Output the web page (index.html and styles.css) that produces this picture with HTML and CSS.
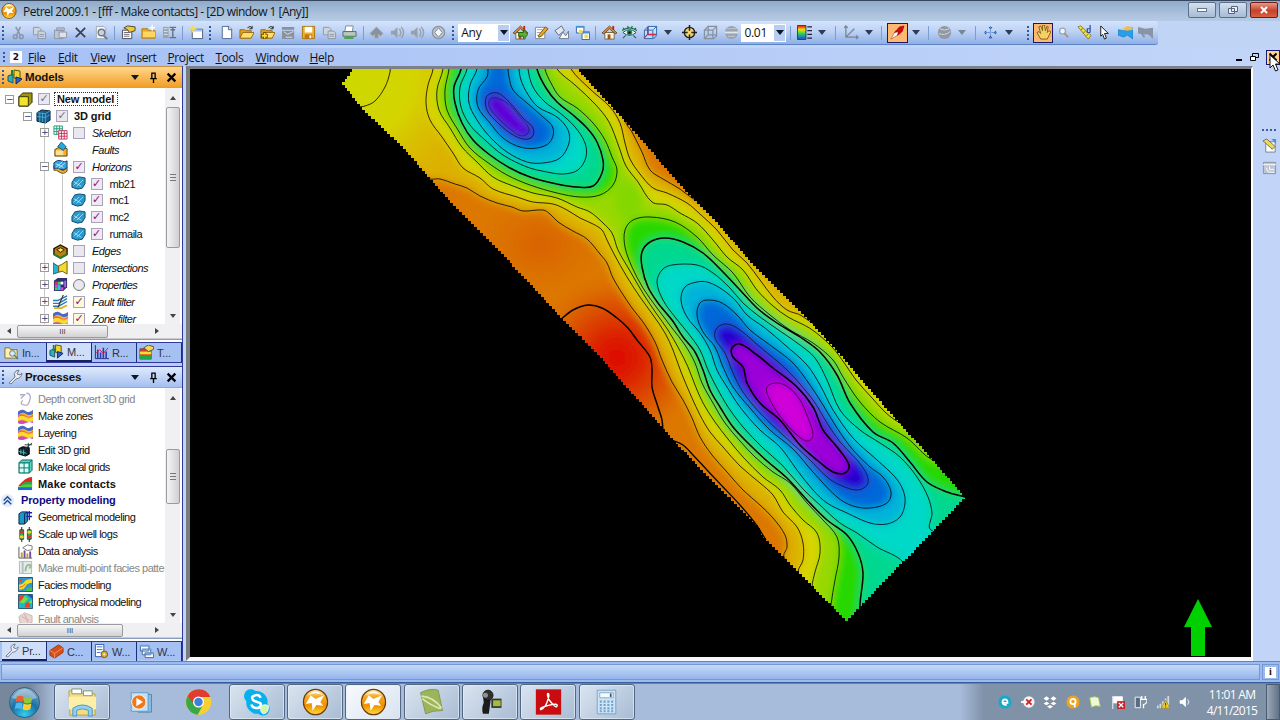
FILE: index.html
```html
<!DOCTYPE html>
<html lang="en">
<head>
<meta charset="utf-8">
<title>Petrel 2009.1</title>
<link rel="stylesheet" href="styles.css">
</head>
<body>
<svg class="defs" width="0" height="0">
<defs>
<linearGradient id="gold" x1="0" y1="0" x2="0" y2="1"><stop offset="0" stop-color="#fff2b8"/><stop offset=".3" stop-color="#f4a820"/><stop offset=".65" stop-color="#f09000"/><stop offset="1" stop-color="#ffe040"/></linearGradient>
<radialGradient id="orb" cx=".5" cy=".9" r=".9"><stop offset="0" stop-color="#30d0f0"/><stop offset=".5" stop-color="#1870a8"/><stop offset="1" stop-color="#8fb0c8"/></radialGradient>
<linearGradient id="rain" x1="0" y1="0" x2="0" y2="1"><stop offset="0" stop-color="#e01010"/><stop offset=".3" stop-color="#f0e000"/><stop offset=".6" stop-color="#20d060"/><stop offset="1" stop-color="#2040e0"/></linearGradient>
<symbol id="petrel" viewBox="0 0 28 28"><ellipse cx="14" cy="14" rx="12.500" ry="13.200" fill="url(#gold)" stroke="#6b3d10" stroke-width="1.300"/><path d="M6 7Q14-1 22 7Q14 3 6 7Z" fill="#fff"/><path d="M4 16l5-9 5 4 9-4-4 7 3 4-7-1-4 6-1-8z" fill="#fff"/></symbol>
<symbol id="cut" viewBox="0 0 16 16"><g fill="none" stroke="#8c95a5" stroke-width="1.600"><path d="M5 2l5 9M10 2L6 11"/><circle cx="4.500" cy="12.500" r="2"/><circle cx="11" cy="12.500" r="2"/></g></symbol>
<symbol id="copy" viewBox="0 0 16 16"><g fill="#ced5df" stroke="#8c95a5"><path d="M1.500 2.500h6l2 2v6h-8z"/><path d="M6.500 6.500h6l2 2v6h-8z"/></g><path d="M8 10h5M8 12h5" stroke="#8c95a5"/></symbol>
<symbol id="paste" viewBox="0 0 16 16"><g fill="#bcc5d2" stroke="#8c95a5"><path d="M1.500 5.500h9v9h-9zM4 3h8v3H4z"/><path d="M6.500 7.500h8v6h-8z" fill="#dde3ea"/></g></symbol>
<symbol id="del" viewBox="0 0 16 16"><path d="M3 3l10 10M13 3L3 13" stroke="#3c4556" stroke-width="2"/></symbol>
<symbol id="preview" viewBox="0 0 16 16"><path d="M2.500 1.500h8l2 2v11h-10z" fill="#f4f6fa" stroke="#a0a8b4"/><circle cx="8" cy="8" r="3.500" fill="#c9d2de" stroke="#707a88" stroke-width="1.500"/><path d="M10 11l4 4" stroke="#707a88" stroke-width="2"/></symbol>
<symbol id="props" viewBox="0 0 16 16"><path d="M1.500 5.500h10v9h-10z" fill="#fff" stroke="#445"/><path d="M3 8h6M3 10h6M3 12h6" stroke="#667"/><path d="M3 3l4-2 8 1v4l-6 2-2-3z" fill="#f0c840" stroke="#4d4420"/></symbol>
<symbol id="fold" viewBox="0 0 16 16"><path d="M1 4h6l1 2h7v8H1z" fill="#e8aa20" stroke="#b07a10"/><path d="M2 7h13v6H2z" fill="#ffd760"/><path d="M12 0v6M9 3h6" stroke="#fff" stroke-width="1.500"/></symbol>
<symbol id="cols" viewBox="0 0 16 16"><path d="M1 2h6v12H1z" fill="#9aa3ae"/><path d="M2 4h4M2 7h4M2 10h4" stroke="#e0e4e8"/><path d="M8 2.500h7M8 13.500h7M11.500 3v10M9 5h5" stroke="#69727e" stroke-width="1.500" fill="none"/></symbol>
<symbol id="newwin" viewBox="0 0 16 16"><path d="M3.500 4.500h11v10h-11z" fill="#fff" stroke="#445a80"/><path d="M4 5h10v2H4z" fill="#a8c8f0"/><path d="M4 0v8M0 4h8" stroke="#f8d850" stroke-width="2"/></symbol>
<symbol id="doc" viewBox="0 0 16 16"><path d="M3.500 1.500h7l3 3v10h-10z" fill="#fff" stroke="#50698c"/><path d="M10 1v4h4" fill="#c8d8ec" stroke="#50698c"/></symbol>
<symbol id="open" viewBox="0 0 16 16"><path d="M1 5h5l1 1h6v8H1z" fill="#e3a020" stroke="#9c6c10"/><path d="M1 14l3-6h12l-3 6z" fill="#ffe070" stroke="#9c6c10"/><path d="M9 3q3-3 5 0m0-2v3h-3" fill="none" stroke="#222"/></symbol>
<symbol id="openadd" viewBox="0 0 16 16"><use href="#open"/><path d="M5 8v7M1.500 11.500h7" stroke="#3c2c00" stroke-width="3.400"/><path d="M5 8.500v6M2 11.500h6" stroke="#ffd820" stroke-width="2"/></symbol>
<symbol id="gopen" viewBox="0 0 16 16"><path d="M1 2h13v3H1zM1 6h13v9H1z" fill="#8993a0"/><path d="M3 7l4 3 6-3M5 13h7" stroke="#dce0e6" fill="none"/></symbol>
<symbol id="save" viewBox="0 0 16 16"><path d="M1.500 1.500h13v13h-13z" fill="#f0b020" stroke="#a87410"/><path d="M4 2h8v6H4z" fill="#fff"/><path d="M4 10h8v5H4z" fill="#bc7814"/><path d="M9 11h2v3H9z" fill="#fff"/></symbol>
<symbol id="print" viewBox="0 0 16 16"><path d="M4 1h8l-1 6H3z" fill="#fff" stroke="#789"/><path d="M1 7h14v5H1z" fill="#b8c8bc" stroke="#567"/><path d="M3 12h10l-1 3H2z" fill="#56a050"/></symbol>
<symbol id="undo" viewBox="0 0 16 16"><path d="M1 9l7-7 3 3 4 4-3 3-2-2v4H6v-4l-2 2z" fill="#88919e" stroke="#aab1bb"/></symbol>
<symbol id="sound" viewBox="0 0 16 16"><path d="M1 6h3l4-4v12l-4-4H1z" fill="#98a0ab"/><path d="M10 4q3 4 0 8M12 2q5 6 0 12" stroke="#98a0ab" stroke-width="1.500" fill="none"/></symbol>
<symbol id="target" viewBox="0 0 16 16"><circle cx="8" cy="8" r="6.500" fill="#c0c7d0" stroke="#8b94a0" stroke-width="1.500"/><path d="M8 3l4 5-4 5-4-5z" fill="#f4f6f8" stroke="#7b8490"/></symbol>
<symbol id="home" viewBox="0 0 16 16"><path d="M11 1h2v5h-2z" fill="#b03018"/><path d="M3 8h10v7H3z" fill="#fff3d8" stroke="#665"/><path d="M0 8.500L8 1l8 7.500-2 1L8 4 2 9.500z" fill="#d88a38" stroke="#503010" stroke-width=".7"/><path d="M6 10h3v5H6z" fill="#a0501c"/></symbol>
<symbol id="ghome" viewBox="0 0 16 16"><use href="#home"/><path d="M6 8h5V5l5 5-5 5v-3H6z" fill="#5ab030" stroke="#24601c"/></symbol>
<symbol id="edit" viewBox="0 0 16 16"><path d="M1.500 2.500h10v12h-10z" fill="#fff" stroke="#7c8898"/><path d="M3 5h6M3 8h4M3 11h4" stroke="#96a0b0"/><path d="M5 11l7-9 3 2-7 8-3 1z" fill="#eca820" stroke="#7c5010"/></symbol>
<symbol id="bucket" viewBox="0 0 16 16"><path d="M1 6l7-5 3 5-6 5z" fill="#dfe6ee" stroke="#5d6c80"/><path d="M5.500 14.500h10v-8l-3 5-3-4z" fill="#f8f8fc" stroke="#6d7888"/></symbol>
<symbol id="wins" viewBox="0 0 16 16"><path d="M1.500 1.500h8v7h-8zM7.500 7.500h8v8h-8z" fill="#fff" stroke="#386098"/><path d="M1 1h9v2H1zM7 7h9v2H7z" fill="#4690d8"/><path d="M4 5h4v4H4zM10 10h4v4h-4z" fill="#f4dc50"/></symbol>
<symbol id="eye" viewBox="0 0 16 16"><path d="M0 6q8-6 16 0M1 3l2 2M6 1l1 3M11 1l-1 3M15 3l-2 2M1 14l3-3 M15 14l-3-3" stroke="#227050" stroke-width="1.300" fill="none"/><path d="M1 8q7-6 14 0-7 6-14 0z" fill="#fff" stroke="#205060"/><circle cx="8" cy="8" r="3" fill="#2c9060"/><circle cx="8" cy="8" r="1.300" fill="#111"/></symbol>
<symbol id="cube" viewBox="0 0 16 16"><path d="M1.500 5.500h9v9h-9zM5.500 1.500h9v9h-9z" fill="#c8f0ff88" stroke="#2864b0"/><path d="M2 5l4-4M11 5l4-4M11 15l4-4" stroke="#2864b0"/><path d="M1 14l4-4h9M5 2v8" fill="none" stroke="#d02848" stroke-width="1.400"/></symbol>
<symbol id="gcube" viewBox="0 0 16 16"><g fill="none" stroke="#8791a0" stroke-width="1.300"><path d="M1.500 5.500h9v9h-9zM5.500 1.500h9v9h-9zM2 5l4-4M11 5l4-4M11 15l4-4M2 14l4-4"/></g></symbol>
<symbol id="aim" viewBox="0 0 16 16"><circle cx="8" cy="8" r="5.500" fill="#f5d46c" stroke="#202020" stroke-width="1.500"/><path d="M8 0v6M8 10v6M0 8h6M10 8h6" stroke="#202020" stroke-width="1.600"/></symbol>
<symbol id="ball" viewBox="0 0 16 16"><circle cx="8" cy="8" r="7" fill="#9aa3ad"/><path d="M1 7h14v2H1z" fill="#e0e5ea"/><path d="M3 4h10M4 12h8" stroke="#c4cad2"/></symbol>
<symbol id="legend" viewBox="0 0 16 16"><path d="M.5.500h9v15h-9z" fill="url(#rain)" stroke="#204060"/><path d="M11 2h5M11 6h5M11 10h5M11 14h5" stroke="#223" stroke-width="1.400"/></symbol>
<symbol id="axis" viewBox="0 0 16 16"><path d="M2 1v12h13M2 13L11 4M0 3l2-2 2 2M13 11l2 2-2 2" fill="none" stroke="#78828f" stroke-width="1.300"/></symbol>
<symbol id="rocket" viewBox="0 0 16 16"><path d="M1 15L6 6l5 3z" fill="#fff" stroke="#863020" stroke-width=".5"/><path d="M5 8l5-6 5-1-2 6-5 4 1-4z" fill="#d80808" stroke="#820000" stroke-width=".6"/></symbol>
<symbol id="globe" viewBox="0 0 16 16"><circle cx="8" cy="8" r="7" fill="#9299a5"/><path d="M3 4q5 3 10 0M2 9q6 3 12-2" stroke="#d4d8de" fill="none"/></symbol>
<symbol id="cross" viewBox="0 0 16 16"><path d="M6 2h4L8 5zM6 14h4L8 11zM2 6v4l3-2zM14 6v4l-3-2z" fill="#2850a8"/><path d="M8 1v14M1 8h14" stroke="#6890d0" stroke-dasharray="3 1"/></symbol>
<symbol id="hand" viewBox="0 0 16 16"><path d="M5 15L1 8l2-1 2 2-2-7 2-1 2 5V0h2l1 6 2-5 1 1-1 6 2-2 2 1-4 8z" fill="#f6d060" stroke="#614510" stroke-width=".8"/></symbol>
<symbol id="mag" viewBox="0 0 16 16"><circle cx="7" cy="6.500" r="3.200" fill="#f0f5fa" stroke="#9aa6b8" stroke-width="1.500"/><path d="M9 9l4 4" stroke="#b09080" stroke-width="2"/></symbol>
<symbol id="ruler" viewBox="0 0 16 16"><path d="M1 2l3-1 11 10-3 4z" fill="#f2df40" stroke="#76691c" stroke-width=".8"/><path d="M4 5l2-1M7 8l2-1M10 11l2-1" stroke="#776a20"/><path d="M14 0v8m0-4h-3v4h3" fill="none" stroke="#3050a0" stroke-width="1.300"/></symbol>
<symbol id="arrow" viewBox="0 0 16 16"><path d="M4 1l8 8H8l2 5-2 1-2-5-2 2z" fill="#fff" stroke="#111"/></symbol>
<symbol id="section" viewBox="0 0 16 16"><path d="M0 5l7 1 9-3v12l-6-4-4 2-6-2z" fill="#26a0e8" stroke="#1478b4" stroke-width=".6"/><path d="M5 4l5-3 5 1 1 3-7 1z" fill="#f0bc50"/></symbol>
<symbol id="gsec" viewBox="0 0 16 16"><path d="M0 2l8 2 8-1v12l-5-5-4 0-7-1z" fill="#8a94a4"/><path d="M3 8l4 5" stroke="#8a94a4" stroke-width="2"/></symbol>
<symbol id="models" viewBox="0 0 16 16"><path d="M7 1l6 1v8l-6-1z" fill="#f0d430" stroke="#5b5010"/><path d="M1 7l5-2v9l-5-2z" fill="#30b0b8" stroke="#185868"/><path d="M9 8l6 2-6 5z" fill="#2864d0" stroke="#102858"/><path d="M4 1h2v6H4z" fill="#248038"/></symbol>
<symbol id="wrench" viewBox="0 0 16 16"><path d="M2 14L8 8Q6 4 9 2l3-1-2 4 3 1 2-2Q15 9 9 10l-5 5z" fill="#e9edf3" stroke="#707c8c"/></symbol>
<symbol id="box" viewBox="0 0 16 16"><path d="M1 5l4-4h10v10l-4 4H1z" fill="#a09410" stroke="#303000"/><path d="M1 5h10v10H1z" fill="#f1e330" stroke="#303000"/></symbol>
<symbol id="bcube" viewBox="0 0 16 16"><path d="M1 4l5-3 9 1v10l-5 3-9-2z" fill="#145e90" stroke="#082030"/><path d="M1 4l9 1v10M10 5l5-3M4 4v10M7 4v10M1 8l9 1 5-3" stroke="#66c0dc" fill="none" stroke-width=".7"/></symbol>
<symbol id="skel" viewBox="0 0 16 16"><path d="M1 1h9v9H1zM4 1v9M7 1v9M1 4h9M1 7h9" fill="#e0fff4" stroke="#2a9878"/><path d="M6 6h9v9H6zM9 6v9M12 6v9M6 9h9M6 12h9" fill="#fff0f4" stroke="#c83860"/></symbol>
<symbol id="fault" viewBox="0 0 16 16"><path d="M2 8l6-3 7 2v8H2z" fill="#f0b030" stroke="#5a3c08"/><path d="M3 9h8v5H3z" fill="#fbe090"/><path d="M5 5l4-5 5 5-3 4z" fill="#28a8d8" stroke="#185078"/></symbol>
<symbol id="horiz" viewBox="0 0 16 16"><path d="M1 7q4 1 7 4t7-2v4q-4 4-8 1t-6-2z" fill="#f0b030" stroke="#604010"/><path d="M1 4q4-4 8-2t6 0v7q-3 4-7 2T1 10z" fill="#38a0e0" stroke="#103a68"/><path d="M3 9l7-6M6 10l7-6M3 5l8 4" stroke="#bce8fa"/></symbol>
<symbol id="surf" viewBox="0 0 16 16"><path d="M1 7l3-5 5-1 6 1v6l-3 5-5 1-6-2z" fill="#2a98cc" stroke="#104868"/><path d="M3 10l6-6M6 11l7-7M3 6l8 5" stroke="#b4e8f8" stroke-width=".9"/></symbol>
<symbol id="edges" viewBox="0 0 16 16"><path d="M1 5l7-4 7 4v6l-7 4-7-4z" fill="#b88010" stroke="#201800" stroke-width="1.500"/><path d="M4 6l4-2 4 2-4 3z" fill="#f9e050" stroke="#201800"/><path d="M1 11l7 4 7-4" stroke="#208038" stroke-width="2" fill="none"/></symbol>
<symbol id="inter" viewBox="0 0 16 16"><path d="M0 3l6 4v6l-6 2z" fill="#28b0d8" stroke="#186078"/><path d="M6 6l3-1 6-4v14l-5-3-4 1z" fill="#f4da30" stroke="#665808"/></symbol>
<symbol id="propi" viewBox="0 0 16 16"><path d="M1 4l4-3h10v10l-4 4H1z" fill="#303070"/><path d="M2 5h3v3H2z" fill="#f03030"/><path d="M5 5h3v3H5zM2 11h3v3H2z" fill="#40d050"/><path d="M8 5h3v3H8z" fill="#fff"/><path d="M2 8h3v3H2zM8 11h3v3H8z" fill="#e840d0"/><path d="M5 8h3v6H5z" fill="#38b8f0"/><path d="M12 4h2v7h-2z" fill="#b060e0"/></symbol>
<symbol id="ffil" viewBox="0 0 16 16"><path d="M0 7h5l10-5M0 10h6l9-5M0 13h6l9-5" stroke="#2878b8" stroke-width="1.500" fill="none"/><path d="M5 15l6-14" stroke="#333" stroke-width="1.200"/><path d="M1 15h8l6-3" stroke="#e0b020" stroke-width="2" fill="none"/></symbol>
<symbol id="zones" viewBox="0 0 16 16"><path d="M0 3q4-4 8-1t8-1v14q-4-3-8 0t-8 0z" fill="#f0c020"/><path d="M0 3q4-4 8-1t8-1v4q-4 3-8 0T0 7z" fill="#4868d0"/><path d="M0 7q4-3 8 0t8-1v2q-4 2-8 0t-8 1z" fill="#f06070"/><path d="M0 9q4-3 8 0t8-1v4q-4 2-8 0t-8 1z" fill="#f8dc30"/><path d="M0 13q4-2 8 0t8 0v2q-4-2-8 0t-8 0z" fill="#d048c0"/></symbol>
<symbol id="depth" viewBox="0 0 16 16"><path d="M2 3h5L3 7M9 1q5 1 4 6t-3 7M5 9q-4 4 2 5h3" fill="none" stroke="#b4aecd" stroke-width="1.500"/></symbol>
<symbol id="e3d" viewBox="0 0 16 16"><path d="M1 7l4-2 7 1v7l-4 2-7-2z" fill="#123" stroke="#000"/><path d="M3 8v5M6 8v6M1 10l8 2" stroke="#40c8b8"/><path d="M8 7l7-6M7 3h8M11 1v5" stroke="#203848"/></symbol>
<symbol id="lgrid" viewBox="0 0 16 16"><path d="M1 4l3-3h11v11l-3 3H1z" fill="#56d8c0" stroke="#10605c"/><path d="M2 5h9v9H2z" fill="#d8fff4"/><path d="M1 4h11v11M12 4l3-3M6.500 4v11M1 9.500h11" fill="none" stroke="#10706c"/></symbol>
<symbol id="contact" viewBox="0 0 16 16"><path d="M0 11Q8 1 15 1v10z" fill="#e02828"/><path d="M2 11Q6 6 9 6h6v5z" fill="#30a838"/><path d="M0 12q6-4 15-3v4H0z" fill="#50d048"/><path d="M0 12h15v3H0z" fill="#2068d8"/></symbol>
<symbol id="geom" viewBox="0 0 16 16"><path d="M1 4l3-2h6v10l-3 3H1z" fill="#1898c8" stroke="#052040"/><path d="M7 4v11M7 4l3-2" stroke="#052040"/><path d="M12 1v10M9 3h6M9 7h6" stroke="#2020a0" stroke-width="1.500"/></symbol>
<symbol id="scale" viewBox="0 0 16 16"><path d="M2 3h4v10H2zM10 3h4v10h-4z" fill="#20c050" stroke="#333"/><path d="M2 4h4v3H2zM10 9h4v3h-4z" fill="#e03030"/><path d="M2 9h4v3H2zM10 4h4v3h-4z" fill="#f0d020"/><path d="M4 0v3M4 13v3M12 0v3M12 13v3" stroke="#111"/></symbol>
<symbol id="data" viewBox="0 0 16 16"><path d="M1 3v12h14" stroke="#555" fill="none"/><path d="M3 9h2v6H3zM9 10h2v5H9z" fill="#b8a020"/><path d="M6 7h2v8H6zM12 8h2v7h-2z" fill="#7448a8"/><path d="M5 4l5-3 5 1v4l-5 1z" fill="#fff" stroke="#777"/></symbol>
<symbol id="multi" viewBox="0 0 16 16"><path d="M1.500 1.500h13v13h-13z" fill="#e4ecea" stroke="#adb7b0"/><path d="M5 2v12" stroke="#b4c0c8" stroke-width="2"/><path d="M8 12q0-7 4-7 3 1 0 4" stroke="#a0b890" fill="none" stroke-width="2"/></symbol>
<symbol id="facies" viewBox="0 0 16 16"><path d="M.5.500h15v15H.5z" fill="#3098d0" stroke="#205070"/><path d="M1 8q4 0 6-3t8-3v4q-5 0-7 4t-7 3z" fill="#f8dc20"/><path d="M1 11q5 0 7-4" stroke="#e06818" fill="none"/><path d="M8 15q1-4 7-4v4z" fill="#48c048"/><path d="M2 2l4 0-4 4z" fill="#e84820"/></symbol>
<symbol id="petro" viewBox="0 0 16 16"><path d="M.5.500h15v15H.5z" fill="#20b8c0" stroke="#205070"/><path d="M1 1h6l-2 5-4 2zM8 10l4-2 1 6H7z" fill="#e84030"/><path d="M7 2l4 3-5 5-4-1zM11 9l4-3v4z" fill="#78e038"/><path d="M10 1h5v4z" fill="#2848d0"/></symbol>
<symbol id="fana" viewBox="0 0 16 16"><path d="M1 6l6-4 8 3v7l-7 3-6-3z" fill="#e8d4d0" stroke="#c4b8b8"/><path d="M4 6l8 4M7 3l4 11" stroke="#cbb0b0"/></symbol>
<symbol id="input" viewBox="0 0 16 16"><path d="M1 3h5l1 2h7v9H1z" fill="#fff0b0" stroke="#806c30"/><circle cx="9" cy="9" r="3" fill="#d8ecf8" stroke="#577"/><path d="M11 11l4 4" stroke="#577" stroke-width="1.500"/></symbol>
<symbol id="result" viewBox="0 0 16 16"><path d="M1.500 0v14.500H16" stroke="#203080" fill="none"/><path d="M4 5v9M7 8v6M10 3v11M13 7v7" stroke="#3038b8" stroke-width="1.700"/><path d="M2 9l4-4 4 4 5-6" stroke="#d02040" fill="none"/></symbol>
<symbol id="templ" viewBox="0 0 16 16"><path d="M1 4h12v11H1z" fill="#e8302c" stroke="#555"/><path d="M1 7h12v3H1z" fill="#f4df30"/><path d="M1 11h12v4H1z" fill="#20a848"/><path d="M5 3l5-3 6 2-1 3-5 2z" fill="#f0d858" stroke="#554"/></symbol>
<symbol id="brick" viewBox="0 0 16 16"><path d="M1 7l9-6 5 3v5l-9 6-5-3z" fill="#d4501c" stroke="#a0380c"/><path d="M1 7l5 3 9-6M6 10v5" stroke="#f59460" fill="none"/></symbol>
<symbol id="flow" viewBox="0 0 16 16"><path d="M1.500.500h9v13h-9z" fill="#fff" stroke="#3058a8"/><path d="M3 3h6M3 6h6M3 9h4" stroke="#3868c8"/><circle cx="11" cy="11" r="3.500" fill="#e0b030" stroke="#755410"/><circle cx="11" cy="11" r="1" fill="#fff"/></symbol>
<symbol id="stack" viewBox="0 0 16 16"><path d="M1.500 1.500h9v6h-9zM3.500 5.500h9v6h-9zM6.500 9.500h9v5h-9z" fill="#fff" stroke="#406898"/><path d="M1 1h10v2H1zM3 5h10v2H3zM6 9h10v2H6z" fill="#70a0d8"/></symbol>
<symbol id="pin" viewBox="0 0 10 10"><path d="M3.500 1v5M3 1h4M6.500 1v5M2 6h6M5 6v4" stroke="#000" stroke-width="1.200" fill="none"/></symbol>
<symbol id="close" viewBox="0 0 10 10"><path d="M1.500 1.500l7 7M8.500 1.500l-7 7" stroke="#000" stroke-width="2"/></symbol>
</defs>
</svg>

<div class="window">
<header class="titlebar"><svg class="i16"><use href="#petrel"/></svg><span class="title">Petrel 2009.1 - [fff - Make contacts] - [2D window 1 [Any]]</span>
<div class="winbtns"><span class="wb"><i class="min"></i></span><span class="wb"><svg width="12" height="10"><path d="M4.500 1.500h6v5h-6zM1.500 3.500h6v5h-6z" fill="#eef" stroke="#56657c"/></svg></span><span class="wb red"><svg width="12" height="10"><path d="M3 2l6 6M9 2L3 8" stroke="#fff" stroke-width="2"/></svg></span></div></header>

<div class="toolbar">
<i class="grip"></i><b><svg><use href="#cut"/></svg></b><b><svg><use href="#copy"/></svg></b><b><svg><use href="#paste"/></svg></b><b><svg><use href="#del"/></svg></b><b><svg><use href="#preview"/></svg></b><i class="sep"></i><b><svg><use href="#props"/></svg></b><b><svg><use href="#fold"/></svg></b><b><svg><use href="#cols"/></svg></b><i class="sep"></i><b><svg><use href="#newwin"/></svg></b>
<i class="grip"></i><b><svg><use href="#doc"/></svg></b><b><svg><use href="#open"/></svg></b><b><svg><use href="#openadd"/></svg></b><b><svg><use href="#gopen"/></svg></b><b><svg><use href="#save"/></svg></b><b><svg><use href="#copy"/></svg></b><b><svg><use href="#print"/></svg></b><i class="sep"></i><b><svg><use href="#undo"/></svg></b><b><svg><use href="#sound"/></svg></b><b><svg><use href="#sound"/></svg></b><b><svg><use href="#target"/></svg></b>
<i class="grip"></i><span class="combo any"><span>Any</span><i class="dd"></i></span><b><svg><use href="#ghome"/></svg></b><b><svg><use href="#edit"/></svg></b><b><svg><use href="#bucket"/></svg></b><b><svg><use href="#wins"/></svg></b><i class="sep"></i><b><svg><use href="#home"/></svg></b><b><svg><use href="#eye"/></svg></b><b><svg><use href="#cube"/></svg></b><i class="drop"></i><i class="gap"></i><b><svg><use href="#aim"/></svg></b><b><svg><use href="#gcube"/></svg></b><b><svg><use href="#ball"/></svg></b><span class="combo num"><span>0.01</span><i class="dd"></i></span>
<i class="sep mid"></i><b><svg><use href="#legend"/></svg></b><i class="drop"></i><i class="sep wide"></i><b><svg><use href="#axis"/></svg></b><i class="drop"></i><i class="sep wide"></i><b class="on"><svg><use href="#rocket"/></svg></b><i class="drop"></i><i class="sep wide"></i><b><svg><use href="#globe"/></svg></b><i class="drop dim"></i><i class="sep wide"></i><b><svg><use href="#cross"/></svg></b><i class="drop"></i>
<i class="grip last"></i><b class="on"><svg><use href="#hand"/></svg></b><b><svg><use href="#mag"/></svg></b><b><svg><use href="#ruler"/></svg></b><b><svg><use href="#arrow"/></svg></b><b><svg><use href="#section"/></svg></b><b><svg><use href="#gsec"/></svg></b>
</div>

<nav class="menubar"><i class="grip"></i><span class="two">2</span><span class="m m1"><u>F</u>ile</span><span class="m m2"><u>E</u>dit</span><span class="m m3"><u>V</u>iew</span><span class="m m4"><u>I</u>nsert</span><span class="m m5"><u>P</u>roject</span><span class="m m6"><u>T</u>ools</span><span class="m m7"><u>W</u>indow</span><span class="m"><u>H</u>elp</span>
<div class="mdi"><svg width="8" height="10"><path d="M1 8h6" stroke="#000" stroke-width="2"/></svg><svg width="9" height="9"><path d="M2.500.500h6v4h-6z" fill="none" stroke="#000"/><path d="M.5 3.500h5v4h-5z" fill="#fff" stroke="#000"/></svg><span class="x"><svg width="10" height="10"><use href="#close"/></svg></span></div>
<svg class="cursor" width="16" height="20" viewBox="0 0 16 20"><path d="M1 1v13l3-3 2.500 6 2.500-1-2.500-6H11z" fill="#fff" stroke="#111"/></svg></nav>

<div class="main">
<aside class="dock">
<section class="panel top">
<h2 class="head amber"><i class="grip"></i><svg class="i16"><use href="#models"/></svg><span>Models</span><em><i class="drop"></i><svg><use href="#pin"/></svg><svg><use href="#close"/></svg></em></h2>
<div class="body"><div class="list tree">
<div class="row l0"><i class="pm">−</i><svg><use href="#box"/></svg><i class="ck g">✓</i><strong class="sel">New model</strong></div>
<div class="row l1"><i class="pm">−</i><svg><use href="#bcube"/></svg><i class="ck g">✓</i><strong>3D grid</strong></div>
<div class="row l2"><i class="pm">+</i><svg><use href="#skel"/></svg><i class="ck g"></i><em>Skeleton</em></div>
<div class="row l2"><i class="pm no"></i><svg><use href="#fault"/></svg><i class="ck none"></i><em>Faults</em></div>
<div class="row l2"><i class="pm">−</i><svg><use href="#horiz"/></svg><i class="ck">✓</i><em>Horizons</em></div>
<div class="row l3"><i class="pm no"></i><svg><use href="#surf"/></svg><i class="ck">✓</i><span>mb21</span></div>
<div class="row l3"><i class="pm no"></i><svg><use href="#surf"/></svg><i class="ck">✓</i><span>mc1</span></div>
<div class="row l3"><i class="pm no"></i><svg><use href="#surf"/></svg><i class="ck">✓</i><span>mc2</span></div>
<div class="row l3"><i class="pm no"></i><svg><use href="#surf"/></svg><i class="ck">✓</i><span>rumaila</span></div>
<div class="row l2"><i class="pm no"></i><svg><use href="#edges"/></svg><i class="ck g"></i><em>Edges</em></div>
<div class="row l2"><i class="pm">+</i><svg><use href="#inter"/></svg><i class="ck g"></i><em>Intersections</em></div>
<div class="row l2"><i class="pm">+</i><svg><use href="#propi"/></svg><i class="ck g round"></i><em>Properties</em></div>
<div class="row l2"><i class="pm">+</i><svg><use href="#ffil"/></svg><i class="ck y">✓</i><em>Fault filter</em></div>
<div class="row l2"><i class="pm">+</i><svg><use href="#zones"/></svg><i class="ck y">✓</i><em>Zone filter</em></div>
</div><div class="vs"><i class="up"></i><i class="thumb t1"></i><i class="dn"></i></div></div>
<div class="hs"><i class="lf"></i><i class="hthumb h1">III</i><i class="rt r1"></i></div>
<div class="tabs"><span><svg><use href="#input"/></svg>In...</span><span class="act"><svg><use href="#models"/></svg>M...</span><span><svg><use href="#result"/></svg>R...</span><span><svg><use href="#templ"/></svg>T...</span></div>
</section>
<section class="panel">
<h2 class="head"><i class="grip"></i><svg class="i16"><use href="#wrench"/></svg><span>Processes</span><em><i class="drop"></i><svg><use href="#pin"/></svg><svg><use href="#close"/></svg></em></h2>
<div class="body"><div class="list proc">
<div class="row dis"><svg><use href="#depth"/></svg><span>Depth convert 3D grid</span></div>
<div class="row"><svg><use href="#zones"/></svg><span>Make zones</span></div>
<div class="row"><svg><use href="#zones"/></svg><span>Layering</span></div>
<div class="row"><svg><use href="#e3d"/></svg><span>Edit 3D grid</span></div>
<div class="row"><svg><use href="#lgrid"/></svg><span>Make local grids</span></div>
<div class="row"><svg><use href="#contact"/></svg><strong>Make contacts</strong></div>
<div class="row cat"><svg viewBox="0 0 16 16"><circle cx="8" cy="8" r="7" fill="#e4ecfa"/><path d="M4 8l4-4 4 4M4 12l4-4 4 4" fill="none" stroke="#1c4c9c" stroke-width="1.500"/></svg><strong>Property modeling</strong></div>
<div class="row"><svg><use href="#geom"/></svg><span>Geometrical modeling</span></div>
<div class="row"><svg><use href="#scale"/></svg><span>Scale up well logs</span></div>
<div class="row"><svg><use href="#data"/></svg><span>Data analysis</span></div>
<div class="row dis"><svg><use href="#multi"/></svg><span>Make multi-point facies patte</span></div>
<div class="row"><svg><use href="#facies"/></svg><span>Facies modeling</span></div>
<div class="row"><svg><use href="#petro"/></svg><span>Petrophysical modeling</span></div>
<div class="row dis"><svg><use href="#fana"/></svg><span>Fault analysis</span></div>
</div><div class="vs"><i class="up"></i><i class="thumb t2"></i><i class="dn"></i></div></div>
<div class="hs"><i class="lf"></i><i class="hthumb h2">III</i><i class="rt r2"></i></div>
<div class="tabs low"><span class="act"><svg><use href="#wrench"/></svg>Pr...</span><span><svg><use href="#brick"/></svg>C...</span><span><svg><use href="#flow"/></svg>W...</span><span><svg><use href="#stack"/></svg>W...</span></div>
</section>
</aside>
<div class="view">
<svg id="map" viewBox="190 69 1061 588" width="1061" height="588">
<defs>
<clipPath id="extent"><path id="outline"/></clipPath>
<filter id="soft" filterUnits="userSpaceOnUse" x="190" y="0" width="1061" height="700"><feGaussianBlur stdDeviation="4.200"/></filter>
<radialGradient id="hot"><stop offset="0" stop-color="#de0800"/><stop offset=".3" stop-color="#dc2400"/><stop offset=".65" stop-color="#da4c00" stop-opacity=".8"/><stop offset="1" stop-color="#dc6800" stop-opacity="0"/></radialGradient>
<radialGradient id="warm"><stop offset="0" stop-color="#d86000"/><stop offset="1" stop-color="#dc7800" stop-opacity="0"/></radialGradient>
<radialGradient id="lime"><stop offset="0" stop-color="#ccd800"/><stop offset=".5" stop-color="#d4d400"/><stop offset="1" stop-color="#d8bc00" stop-opacity="0"/></radialGradient>
</defs>
<g clip-path="url(#extent)"><g id="bands" filter="url(#soft)"></g><g id="lines" fill="none" stroke="#000"></g></g>
<path d="M1198 599l14 28h-7v29h-14v-29h-7z" fill="#00d000"/>
</svg>
</div>
<div class="rail"><i class="hgrip"></i><svg viewBox="0 0 16 16"><path d="M4 4h10v11H4z" fill="#fff" stroke="#689"/><path d="M1 3l4-2 9 8-3 3z" fill="#e8dc50" stroke="#766"/><path d="M10 1h5v5" fill="#4890d0"/></svg><svg viewBox="0 0 16 16"><path d="M1.500 2.500h13v12h-13z" fill="#bdc6d2" stroke="#8792a4"/><path d="M1 5h14M4 8l3 5h6M8 7v3h5" stroke="#fff" fill="none"/></svg></div>
</div>

<div class="status"><span></span><b>i</b></div>
</div>

<footer class="taskbar">
<div class="slot start"><svg width="34" height="34" viewBox="0 0 34 34"><circle cx="17" cy="17" r="15.500" fill="url(#orb)" stroke="#345a78"/><path d="M4 12Q17-6 30 12Q17 18 4 12Z" fill="#fff" opacity=".35"/><path d="M9 11q4-2 7 0l-1 6q-4-2-7 0z" fill="#f06028"/><path d="M17 11q4 2 8 0l-1 6q-4 2-8 0z" fill="#90c840"/><path d="M8 18q4-2 7 0l-1 6q-4-2-7 0z" fill="#50b8f0"/><path d="M16 18q4 2 8 0l-1 6q-4 2-8 0z" fill="#fcd030"/></svg></div>
<div class="slot btn"><svg class="big" viewBox="0 0 32 32"><path d="M2 4h12l2 3h13v22H3z" fill="#f4dc84" stroke="#c4a040"/><path d="M5 2h10v5H5zM17 4h9v5h-9z" fill="#fff" stroke="#7a9a70"/><path d="M2 10h28v13H2z" fill="#fdeea8"/><path d="M6 30v-8q10-7 20 0v8h-4v-6q-6-3-12 0v6z" fill="#90d0f0" stroke="#4898c8"/></svg></div>
<div class="slot"><svg viewBox="0 0 32 32"><path d="M13 7h16v21H13z" fill="#88bce0" stroke="#4880ac"/><path d="M5 5h20v22H5z" fill="#c4e0f4" stroke="#5b94c0"/><circle cx="14" cy="16" r="8.500" fill="#f07818" stroke="#fff"/><path d="M11 11l8 5-8 5z" fill="#fff"/></svg></div>
<div class="slot"><svg viewBox="0 0 32 32"><circle cx="16" cy="16" r="15" fill="#f8d030"/><path d="M3 9A15 15 0 0 1 30 10H16L9 19z" fill="#e03c30"/><path d="M3 9A15 15 0 0 0 15 31l6-11-10-1z" fill="#38a848"/><circle cx="16" cy="16" r="6.500" fill="#fff"/><circle cx="16" cy="16" r="5" fill="#4080d8"/></svg></div>
<div class="slot btn"><svg viewBox="0 0 32 32"><path d="M9 1a8 8 0 0 1 6 2 13 13 0 0 1 14 15 8 8 0 0 1-11 12A13 13 0 0 1 4 15 8 8 0 0 1 9 1z" fill="#08b0ec"/><path d="M21 11q-2-4-6-3-5 1-4 4 1 3 6 4t4 4q-1 4-6 3-4 0-5-4" fill="none" stroke="#fff" stroke-width="3"/><path d="M21 22q2-4 9-2 1 9-6 10-4-2-3-8z" fill="#d9f4a0" stroke="#fff"/></svg></div>
<div class="slot btn"><svg><use href="#petrel"/></svg></div>
<div class="slot btn lit"><svg><use href="#petrel"/></svg></div>
<div class="slot btn"><svg viewBox="0 0 32 32"><path d="M3 5q12-6 21-3l5 24q-12 0-20 4z" fill="#9cb45c" stroke="#7c9248"/><path d="M4 9q14 1 24 14M5 12q10 8 22 12" stroke="#dbe8ac" stroke-width="2" fill="none"/></svg></div>
<div class="slot btn"><svg viewBox="0 0 32 32"><path d="M7 8l9-5v12l-2 15H7q-2-6 1-13z" fill="#1c1c1c"/><circle cx="13" cy="8" r="6" fill="#303030" stroke="#111"/><circle cx="10" cy="8" r="3" fill="#909090"/><path d="M17 12h12v11H17z" fill="#333"/><path d="M19 14h9v7h-9z" fill="#a4bc38"/></svg></div>
<div class="slot btn"><svg viewBox="0 0 32 32"><path d="M1 1h30v30H1z" fill="#c80c10"/><path d="M15 6q3 0 0 8-2 8-8 11-3-2 9-5t10 1q-1 3-9-7-3-6-2-8z" fill="none" stroke="#fff" stroke-width="1.700"/></svg></div>
<div class="slot btn"><svg viewBox="0 0 32 32"><path d="M5 2h22v28H5z" fill="#cfe4f4" stroke="#6c9cc4"/><path d="M8 5h16v6H8z" fill="#f4fbff" stroke="#7aa0bc"/><path d="M8 15.500h16M8 19.500h16M8 23.500h16M8 27h16" stroke="#70a4d0" stroke-width="2.500" stroke-dasharray="2.500 2"/><path d="M20 6h2v4h-2z" fill="#446"/></svg></div>
<div class="tray">
<svg viewBox="0 0 16 16"><circle cx="8" cy="8" r="7.500" fill="#18a8c8"/><path d="M5 9h6q0-4-3-4t-3 4q1 3 5 2" fill="none" stroke="#fff" stroke-width="1.800"/></svg>
<svg viewBox="0 0 16 16"><circle cx="9" cy="8" r="6.500" fill="#f4f4f4"/><path d="M6 5l6 6M12 5l-6 6" stroke="#d01c1c" stroke-width="2"/><path d="M0 8h4" stroke="#fff" stroke-width="2"/></svg>
<svg viewBox="0 0 16 16"><path d="M4 1l4 3-4 3-4-3zM12 1l4 3-4 3-4-3zM4 7l4 3-4 2-4-2zM12 7l4 3-4 2-4-2zM8 11l4 2-4 3-4-3z" fill="#fff" stroke="#68788c" stroke-width=".6"/></svg>
<svg viewBox="0 0 16 16"><circle cx="8" cy="8" r="7.500" fill="#eca420"/><circle cx="8" cy="7.500" r="3" fill="none" stroke="#fff" stroke-width="2"/><path d="M10 9v5" stroke="#fff" stroke-width="2"/></svg>
<svg viewBox="0 0 16 16"><path d="M2 3q6-2 10 0l2 10q-6-2-10 1z" fill="#f0f8d8" stroke="#a0cc50"/></svg>
<svg viewBox="0 0 16 16"><path d="M2 1v15M3 2h10v7H3z" fill="#fff" stroke="#fff"/><path d="M7 7h9v9H7z" fill="#c8242c"/><path d="M9 9l5 5M14 9l-5 5" stroke="#fff" stroke-width="1.500"/></svg>
<svg viewBox="0 0 16 16"><path d="M2.500 2.500h6v12h-6z" fill="#5c6c80" stroke="#fff"/><path d="M10 1v4M14 1v4M8 5h8v3q-2 3-4 3v4" fill="none" stroke="#fff" stroke-width="1.500"/></svg>
<svg viewBox="0 0 16 16"><path d="M1 12h2v3H1zM4 10h2v5H4zM7 7h2v8H7zM10 4h2v11h-2zM13 1h2v14h-2z" fill="#d0d8e0"/><path d="M11 6l5 9H6z" fill="#f4d020" stroke="#806810" stroke-width=".6"/><path d="M11 9v5" stroke="#222" stroke-dasharray="3 1"/></svg>
<svg viewBox="0 0 16 16"><path d="M2 6h3l4-4v12l-4-4H2z" fill="#fff"/><path d="M11 5q3 3 0 6" stroke="#fff" fill="none"/></svg>
</div>
<div class="clock"><span>11:01 AM</span><span>4/11/2015</span></div><div class="peek"></div>
</footer>
<script src="map.js"></script>
</body>
</html>
```
FILE: styles.css
```css
*{box-sizing:border-box}
html,body{margin:0;height:100%}
body{width:1280px;height:720px;overflow:hidden;display:flex;flex-direction:column;background:#c0d4f5;font-family:"Liberation Sans",Arial,sans-serif;font-size:11px;color:#111}
i,em{font-style:normal}
.defs{position:absolute}
.window{height:683px;display:flex;flex-direction:column}
.i16{width:16px;height:16px;flex:none}
.titlebar{height:21px;border-top:1px solid #36465c;background:linear-gradient(#8faaca,#a9c0dc 60%,#b5cae4);display:flex;align-items:center;padding-left:1px;flex:none}
.title{font:12px "Open Sans","Noto Sans",sans-serif;letter-spacing:-.53px;margin-left:6px;color:#101820;white-space:nowrap}
.winbtns{margin-left:auto;display:flex;gap:3px;align-self:flex-start;padding-right:2px}
.wb{width:28px;height:16px;margin-top:1px;border:1px solid #5c708c;border-radius:2px;background:linear-gradient(#d4e0ee,#a7bbd4);display:flex;align-items:center;justify-content:center}
.wb.red{background:linear-gradient(#e49a88,#c8402c 55%,#d86040);border-color:#6c2018}
.min{width:10px;height:4px;background:#fff;border:1px solid #65758c}
.toolbar{height:24px;display:flex;align-items:center;background:linear-gradient(#d4e3fc,#bdd2f5 45%,#8fb0e6);width:1158px;border-bottom:1px solid #5b83c6;border-radius:0 2px 3px 0;flex:none;margin-bottom:3px}
.toolbar b{width:20.600px;flex:none;height:20px;display:flex;align-items:center;justify-content:center}
.toolbar svg{width:15px;height:15px}
.toolbar b.on{background:#ffb870;border:1px solid #18186c}
.grip{width:3px;height:14px;margin:0 3.500px 0 3px;flex:none;background:repeating-linear-gradient(#3458a0 0 2px,transparent 2px 4px) 0 0/2px 100% no-repeat}
.toolbar .grip{margin-right:3.600px}
.toolbar .grip:first-child{margin:0 3.700px 0 2px}
.toolbar .last{margin:0 3px 0 10.500px}
.sep{width:6.200px;height:14px;flex:none;background:linear-gradient(#7c9cd4,#7c9cd4) 50%/1px 100% no-repeat}
.sep.wide{width:11px}
.sep.mid{width:7.800px}
.gap{width:4px}
.drop{width:15px;flex:none;display:flex;justify-content:center}
.drop:before,.dd:before{content:"";border:4px solid transparent;border-top:5px solid #101828;border-bottom:0}
.toolbar .drop:before{border-top-color:#303c54}
.toolbar .drop.dim:before{border-top-color:#7a8698}
.combo{height:18px;background:#fff;display:flex;align-items:center;justify-content:space-between;font:12px "Open Sans",sans-serif;padding-left:3px;flex:none}
.combo span{letter-spacing:-.3px}
.any{width:52px}.num{width:45px}
.dd{width:11px;height:16px;margin-right:1px;background:#b8cdf2;display:flex;align-items:center;justify-content:center}
.menubar{height:18px;display:flex;align-items:center;background:linear-gradient(90deg,#a7c1f5,#c2d5f9);font:12px "Open Sans","Noto Sans",sans-serif;flex:none;position:relative}
.menubar .grip{height:10px;margin-right:4px}
.two{width:12px;height:12px;background:#fff;font:bold 9px/12px "DejaVu Sans",sans-serif;text-align:center;margin-right:6px}
.m{letter-spacing:-.4px;flex:none}
.m1{width:30px}.m2{width:32.500px}.m3{width:36px}.m4{width:41px}.m5{width:48px}.m6{width:40px}.m7{width:54px}
.mdi{margin-left:auto;display:flex;align-items:center;gap:7px}
.mdi .x{width:14px;height:15px;background:#ffd294;border:1px solid #181870;display:flex;align-items:center;justify-content:center}
.cursor{position:absolute;right:-5px;top:6px}
.main{flex:1;display:flex;min-height:0}
.dock{width:183px;border-right:1px solid #30389a;display:flex;flex-direction:column;background:#b4cbf4;flex:none}
.panel{display:flex;flex-direction:column;height:294px}
.panel.top{height:300px}
.head{height:22px;margin:0;display:flex;align-items:center;font-size:12px;background:linear-gradient(#dfeafd,#a4c0f0);border-top:1px solid #30389a;border-bottom:1px solid #8fa8d8;flex:none}
.amber{background:linear-gradient(#ffd68c,#f29e26);border-top-color:#c89040}
.head .grip{margin:0 2px 0 2px}
.head span{font-weight:bold;font-size:11.500px;margin-left:2px;letter-spacing:-.15px}
.head em{margin-left:auto;display:flex;align-items:center;gap:6px;padding-right:5px}
.head em svg{width:11px;height:11px}
.head em svg:first-of-type{margin-right:1px}
.body{display:flex;flex:1;min-height:0;background:#fff}
.list{flex:1;overflow:hidden;padding-top:2.700px;min-width:0}
.row{height:16.880px;display:flex;align-items:center;white-space:nowrap;letter-spacing:-.48px}
.row svg{width:15px;height:15px;flex:none}
.row em{font-style:italic}
.row strong{letter-spacing:-.1px}
.l0{padding-left:5px}.l1{padding-left:23px}
.l2{padding-left:40px;background:linear-gradient(#c8c8c8,#c8c8c8) 44px 0/1px 100% no-repeat}
.l3{padding-left:57.500px;background:linear-gradient(#c8c8c8,#c8c8c8) 44px 0/1px 100% no-repeat,linear-gradient(#c8c8c8,#c8c8c8) 62px 0/1px 100% no-repeat}
.pm{width:9px;height:9px;border:1px solid #9a9a9a;background:#fff;font:9px/7px "DejaVu Sans",sans-serif;text-align:center;margin-right:4px;flex:none;letter-spacing:0;color:#223a78}
.pm.no{visibility:hidden}
.ck{width:12px;height:12px;border:1px solid #a9a2b8;background:#f2e8f4;margin:0 7px 0 5px;font:bold 11px/10px "DejaVu Sans",sans-serif;color:#741a80;text-align:center;letter-spacing:0;flex:none}
.ck.g{background:#e8e8ee;color:#776f88}.ck.y{background:#fff8d8}.ck.none{visibility:hidden}.ck.round{border-radius:50%;border-color:#777}
.sel{outline:1px dotted #333;padding:0 3px 0 2px}
.row .ck+strong{margin-left:-1px}
.row .ck+strong.sel{margin-left:-2px}
.proc .row svg{margin:0 5px 0 18px}
.proc .row strong{letter-spacing:.18px}
.proc .cat svg{margin:0 6px 0 0}.proc .row.cat strong{color:#100c80;letter-spacing:-.15px}
.dis{color:#868686}
.vs{width:15px;margin-right:2px;background:#f0f0f2;display:flex;flex-direction:column;align-items:center;flex:none}
.up,.dn{height:19px;display:flex;align-items:center}
.up:before{content:"";border:3px solid transparent;border-bottom:4px solid #444;border-top:0}
.dn{margin-top:auto;height:16px}.dn:before{content:"";border:3px solid transparent;border-top:4px solid #444;border-bottom:0}
.thumb{width:14px;border:1px solid #9a9a9e;border-radius:2px;background:repeating-linear-gradient(#777 0 1px,transparent 1px 3px) 50%/6px 8px no-repeat,linear-gradient(90deg,#f4f4f4,#d0d0d4)}
.t1{height:141px}.t2{height:55px;margin-top:42px}
.hs{height:15px;background:#f0f0f2;display:flex;align-items:center;flex:none;border-bottom:1px solid #ccc}
.lf{width:17px;display:flex;justify-content:center}
.lf:before{content:"";border:3px solid transparent;border-right:4px solid #444;border-left:0}
.rt:before{content:"";display:block;border:3px solid transparent;border-left:4px solid #444;border-right:0}
.hthumb{height:13px;border:1px solid #9a9a9e;border-radius:2px;background:linear-gradient(#f6f6f6,#d2d2d6);font-size:8px;line-height:11px;text-align:center;color:#444}
.h1{width:91px}.h2{width:106px}.r1{margin-left:47px}.r2{margin-left:32px}
.tabs{height:27px;display:flex;align-items:flex-start;padding:3px 2px 4px;border-top:1px solid #8c9cc0;background:linear-gradient(#fff 0 2px,#303a9c 2px 3px,#a5c0f2 3px 22px,#30389a 22px 23px,#b9cdf5 23px);flex:none;color:#334;letter-spacing:-.2px}
.tabs.low{height:22px;padding-bottom:0;background:linear-gradient(#fff 0 2px,#303a9c 2px 3px,#a5c0f2 3px)}
.tabs span{width:45px;height:19px;display:flex;align-items:center;padding-left:2px;gap:3px;border-right:1px solid #1c3078;flex:none}
.tabs svg{width:15px;height:15px;flex:none}
.tabs .act{background:#cfdffa;border-bottom:2px solid #182060}
.view{width:1067px;background:#000;border-left:4px solid #777b80;border-right:2px solid #fff;border-top:3px solid #7c8088;border-bottom:4px solid #f6f8fc;margin-left:3px;flex:none;overflow:hidden}
.view svg{display:block}
.rail{flex:1;background:#c2d4f7;padding-top:63px;display:flex;flex-direction:column;align-items:center;gap:7px;padding-left:5px}
.rail svg{width:15px;height:15px}
.hgrip{width:14px;height:2px;background:repeating-linear-gradient(90deg,#3c5ca4 0 2px,transparent 2px 4px)}
.status{height:22px;flex:none;display:flex;gap:2px;padding:2px 1px;background:#9dbbea;border-top:1px solid #5e84c8;border-bottom:1px solid #385ca0}
.status span{flex:1;border:1px solid #7497d8;background:linear-gradient(#c6daf8,#94b4ec)}
.status b{width:17px;border:1px solid #7497d8;display:flex;justify-content:center;align-items:center;font:bold 10px/10px "Liberation Serif",serif;background:linear-gradient(#fff,#fff) 50%/11px 11px no-repeat}
.taskbar{height:37px;background:linear-gradient(90deg,#78889c 0 30px,#a6bcda 54px 960px,#8092a8 984px);border-top:1px solid #708098;display:flex;align-items:center;flex:none}
.slot{width:56px;height:36px;margin-right:2.300px;display:flex;align-items:center;justify-content:center;flex:none}
.slot svg{width:27px;height:28px}
.slot svg.big{width:31px;height:31px}
.start{width:48px;margin-right:6px}
.slot.start svg{width:33px;height:33px}
.btn{border:1px solid #536780;border-radius:3px;background:linear-gradient(135deg,#dae4f0,#a8bcd4);box-shadow:inset 0 0 0 1px #e6eef8aa}
.lit{background:linear-gradient(135deg,#f8fafe,#d8e3f0)}
.tray{display:flex;gap:8.500px;margin-left:auto;align-items:center}
.tray svg{width:14px;height:14px;flex:none}
.clock{width:74px;display:flex;flex-direction:column;align-items:center;color:#fff;font:12px/16px "Open Sans",sans-serif;letter-spacing:-.7px;padding-left:6px;padding-top:1px}
.peek{width:14px;height:36px;border:1px solid #4c5c70;background:linear-gradient(90deg,#9aa8b8,#627286)}
```
FILE: map.js
```js
// Grid outline, in window coordinates.
const outline = "357,66 342,85 362,110 403,149 430,180 450,203 492,245 530,285 560,318 600,358 665,432 700,470 758,528 763,538 805,580 845,621 965,496 932,458 898,420 868,386 840,353 810,320 780,290 750,260 718,222 688,192 627,122 594,86 576,66";

// Contours from high to low: fill of the area inside, line weight, points.
const contours = [
  ["#dcb000", .8, "300,60 428,178 440,179 455,184 467,188 480,196 497,203 512,207 523,211 543,210 550,214 558,222 573,231 587,239 600,254 607,263 613,278 622,293 632,308 643,322 655,342 662,360 672,382 683,400 692,418 700,437 712,455 727,472 743,490 760,505 773,518 785,535 787,547 784,557 850,680 1050,500 735,222 692,198 680,189 663,179 650,170 642,152 632,132 626,120 660,50"],
  ["#d8d400", .8, "432,50 433,69 428,85 426,103 430,120 442,137 453,153 463,168 480,178 493,189 517,197 533,202 553,204 567,210 580,218 593,224 602,230 607,240 614,254 627,277 640,297 653,315 665,333 673,350 681,372 692,398 700,415 710,432 723,447 740,466 760,483 773,495 783,512 797,527 803,543 803,560 798,572 800,680 1050,500 802,316 787,310 773,297 760,280 747,263 733,250 717,230 700,214 687,203 667,193 653,188 640,174 630,159 625,143 620,123 610,107 590,89 571,69 565,50"],
  ["#98d800", .8, "443,50 443,69 437,90 439,110 450,128 462,147 477,162 493,177 513,186 533,193 557,198 577,207 590,212 603,223 612,233 618,250 630,271 644,295 656,313 668,330 679,349 688,367 695,385 703,403 715,422 728,439 743,457 763,477 780,490 790,505 803,520 817,533 820,553 815,572 812,587 810,680 1050,500 900,423 886,413 873,399 856,380 845,364 832,347 811,329 788,317 773,306 757,290 743,270 727,257 713,240 697,223 680,213 667,205 652,202 638,182 626,166 619,147 609,122 595,104 575,85 557,69 550,50"],
  ["#28d800", .8, "449,50 449,69 445,90 447,110 458,130 470,148 487,162 507,175 530,185 557,193 580,197 600,195 613,185 617,170 612,157 605,140 593,123 577,108 560,97 551,83 545,69 544,50"],
  ["#28d800", .8, "650,217 633,220 625,230 625,247 632,267 643,288 657,308 672,328 685,345 695,363 702,383 713,403 725,423 740,441 755,457 773,472 790,483 807,503 823,520 837,537 839,557 835,580 831,605 825,680 1050,500 933,460 907,438 880,422 860,402 843,377 833,360 813,343 790,330 770,315 750,297 733,273 713,255 697,237 675,222"],
  ["#00d890", 1.5, "461,50 461,69 454,87 455,103 462,123 473,140 490,155 510,168 530,177 557,184 577,187 593,186 602,173 603,160 597,142 587,128 573,115 557,102 546,88 537,69 536,50"],
  ["#00d890", 1.5, "665,238 650,242 642,252 642,267 648,287 658,303 672,320 683,337 695,352 703,370 710,390 720,407 733,427 750,445 767,461 787,478 807,500 827,520 847,535 858,553 863,573 860,605 860,680 1050,520 965,497 947,492 927,482 910,462 893,443 873,432 850,403 837,375 820,352 800,337 777,323 757,308 740,290 723,272 703,253 683,242"],
  ["#00d8c8", .8, "467,50 467,69 460,87 461,107 470,125 485,140 503,155 527,167 547,172 563,174 578,170 586,157 585,143 575,127 560,113 545,102 533,87 528,69 527,50"],
  ["#00d8c8", .8, "672,265 662,270 657,282 663,300 675,317 688,333 700,350 708,370 717,388 728,407 743,427 763,448 782,465 803,489 820,505 840,523 857,533 877,547 903,562 960,640 1000,560 931,530 932,513 928,497 917,477 900,457 880,443 860,430 840,410 827,380 815,358 800,345 780,331 760,317 743,303 730,288 713,273 697,265"],
  ["#00b4d8", .8, "477,50 477,69 470,85 469,103 477,120 490,137 507,152 527,162 543,163 560,158 569,143 568,130 557,117 538,107 527,93 521,80 519,69 519,50"],
  ["#00b4d8", .8, "697,282 685,287 681,300 687,317 700,333 710,350 717,370 727,387 740,407 760,430 780,447 797,470 813,490 827,503 847,513 870,523 887,524 900,517 905,503 903,490 895,477 877,460 853,438 833,410 820,385 807,365 785,345 765,328 747,315 735,300 720,288 707,282"],
  ["#0068d8", .8, "488,50 488,69 487,77 478,90 478,107 490,123 503,138 520,147 537,148 550,142 553,128 543,117 527,103 513,90 509,77 508,69 508,50"],
  ["#0068d8", .8, "708,300 700,303 697,315 703,332 715,347 723,367 733,387 750,408 770,430 793,449 813,472 837,497 853,506 870,508 887,503 891,492 883,477 870,467 853,450 837,428 823,405 810,385 793,363 770,345 750,330 737,315 722,303"],
  ["#2800d0", .6, "492,93 486,98 487,110 497,122 510,133 523,139 532,137 533,128 523,118 512,105 500,94"],
  ["#2800d0", .6, "727,324 717,328 715,338 725,353 733,373 743,392 760,413 783,435 807,457 827,477 840,485 857,490 867,485 867,475 857,460 840,442 827,423 813,400 787,370 760,347 740,330"],
  ["#6000d8", .4, "492,98 489,106 498,118 510,129 522,136 529,130 520,117 507,103"],
  ["#9c00d8", 1.6, "740,344 732,348 733,357 743,367 747,383 760,403 780,420 800,445 817,460 833,472 845,473 849,465 837,447 823,430 813,407 797,387 773,368 757,355"],
  ["#d000d8", .6, "777,383 767,387 770,400 783,420 797,435 808,441 813,435 808,418 800,400 788,387"]
];

// Index lines that cut the edge of the grid.
const openLines = [
  [1.5, "560,320 573,310 588,305 602,308 617,318 628,328 637,340 650,357 652,370 652,387 658,407 662,420 663,434"],
  [1.3, "668,438 672,440 683,445 693,455 707,470 723,487 740,505 755,523 766,540"],
  [.8, "390,64 390,72 385,87 375,101 365,106 357,107"]
];

const parse = s => s.split(" ").map(p => p.split(",").map(Number));
const ns = "http://www.w3.org/2000/svg";

function smooth(points, closed) {
  const n = points.length;
  const at = i => closed ? points[(i + n) % n] : points[Math.max(0, Math.min(n - 1, i))];
  let d = "M" + points[0];
  for (let i = 0; i < (closed ? n : n - 1); i++) {
    const [a, b, c, e] = [at(i - 1), at(i), at(i + 1), at(i + 2)];
    // Uneven neighbours are limited so that long spans do not bend short ones.
    const len = Math.hypot(c[0] - b[0], c[1] - b[1]);
    const tangent = (p, q) => {
      const x = q[0] - p[0], y = q[1] - p[1], l = Math.hypot(x, y) || 1;
      return [x / l * len / 3, y / l * len / 3];
    };
    const t1 = tangent(a, c), t2 = tangent(b, e);
    d += `C${b[0] + t1[0]},${b[1] + t1[1]} ${c[0] - t2[0]},${c[1] - t2[1]} ${c}`;
  }
  return d + (closed ? "Z" : "");
}

function stepped(points, cell) {
  let d = "M" + points[0];
  points.forEach((p, i) => {
    const q = points[(i + 1) % points.length];
    const steps = Math.max(1, Math.round(Math.abs(q[1] - p[1]) / cell));
    for (let k = 1; k <= steps; k++) {
      d += `H${Math.round(p[0] + (q[0] - p[0]) * k / steps)}V${Math.round(p[1] + (q[1] - p[1]) * k / steps)}`;
    }
  });
  return d + "Z";
}

function add(parent, tag, attrs) {
  const el = document.createElementNS(ns, tag);
  for (const key in attrs) el.setAttribute(key, attrs[key]);
  parent.appendChild(el);
}

const bands = document.getElementById("bands");
const lines = document.getElementById("lines");
document.getElementById("outline").setAttribute("d", stepped(parse(outline), 3));
add(bands, "rect", {x: 190, y: 20, width: 1061, height: 660, fill: "#dc7800"});
add(bands, "ellipse", {cx: 540, cy: 245, rx: 80, ry: 65, fill: "url(#warm)"});
add(bands, "ellipse", {cx: 617, cy: 358, rx: 85, ry: 85, fill: "url(#hot)"});
contours.forEach(([fill, weight, points], i) => {
  const d = smooth(parse(points), true);
  add(bands, "path", {d, fill});
  if (i === 0) add(bands, "circle", {cx: 350, cy: 75, r: 130, fill: "url(#lime)"});
  add(lines, "path", {d, "stroke-width": weight});
});
add(bands, "ellipse", {cx: 628, cy: 200, rx: 14, ry: 20, fill: "#84d800"});
openLines.forEach(([weight, points]) => add(lines, "path", {d: smooth(parse(points), false), "stroke-width": weight}));
```
